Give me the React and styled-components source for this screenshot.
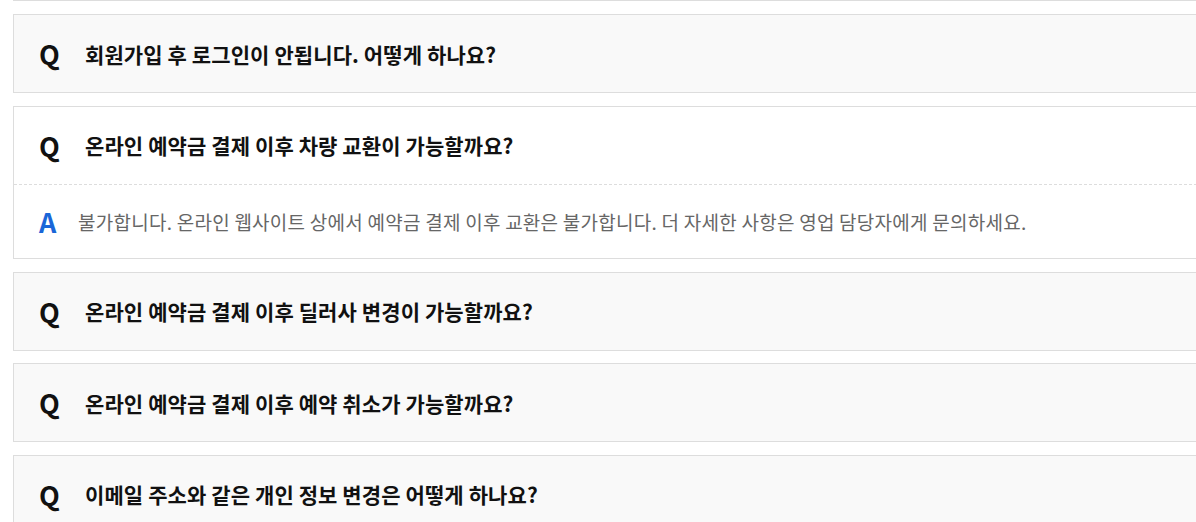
import React, { useState } from "react";
import styled, { createGlobalStyle } from "styled-components";

const GlobalStyle = createGlobalStyle`
  html, body {
    margin: 0;
    padding: 0;
    background: #fff;
    overflow: hidden;
  }
  body {
    font-family: "Noto Sans CJK KR", "Noto Sans", sans-serif;
  }
`;

const faqs = [
  {
    q: "회원가입 후 로그인이 안됩니다. 어떻게 하나요?",
    a: "가입하신 이메일 인증을 완료하신 후 다시 로그인해 주세요.",
  },
  {
    q: "온라인 예약금 결제 이후 차량 교환이 가능할까요?",
    a: "불가합니다. 온라인 웹사이트 상에서 예약금 결제 이후 교환은 불가합니다. 더 자세한 사항은 영업 담당자에게 문의하세요.",
  },
  {
    q: "온라인 예약금 결제 이후 딜러사 변경이 가능할까요?",
    a: "딜러사 변경은 영업 담당자에게 문의하세요.",
  },
  {
    q: "온라인 예약금 결제 이후 예약 취소가 가능할까요?",
    a: "마이페이지에서 예약 취소를 신청하실 수 있습니다.",
  },
  {
    q: "이메일 주소와 같은 개인 정보 변경은 어떻게 하나요?",
    a: "마이페이지의 회원정보 수정에서 변경하실 수 있습니다.",
  },
];

const List = styled.ul`
  list-style: none;
  margin: 0 0 0 13px;
  padding: 13px 0 0;
  width: 1200px;
  border-top: 1px solid #ddd;
`;

const Item = styled.li`
  margin-bottom: 12.5px;
  border: 1px solid #ddd;
  background: ${(p) => (p.$open ? "#fff" : "#f9f9f9")};
`;

const Row = styled.div`
  display: flex;
  align-items: center;
  height: ${(p) => p.$h}px;
  padding-left: 25px;
  cursor: ${(p) => (p.$clickable ? "pointer" : "default")};
`;

const Question = styled(Row)`
  border-bottom: ${(p) => (p.$open ? "1px dashed #ddd" : "none")};
`;

const Mark = styled.span`
  flex: 0 0 auto;
  width: ${(p) => p.$w}px;
  font-weight: 700;
  font-size: 27px;
  line-height: 1;
  color: ${(p) => p.$color};
`;

const QText = styled.span`
  font-size: 21px;
  font-weight: 700;
  letter-spacing: 0.1px;
  color: #111;
`;

const AText = styled.span`
  font-size: 19px;
  font-weight: 400;
  letter-spacing: 0.25px;
  color: #666;
`;

export default function App() {
  const [open, setOpen] = useState(1);

  return (
    <>
      <GlobalStyle />
      <List>
        {faqs.map((f, i) => (
          <Item key={i} $open={open === i}>
            <Question
              $h={77}
              $open={open === i}
              $clickable
              onClick={() => setOpen(open === i ? -1 : i)}
            >
              <Mark $w={46} $color="#111">Q</Mark>
              <QText>{f.q}</QText>
            </Question>
            {open === i && (
              <Row $h={73.5}>
                <Mark $w={39} $color="#1a66d8">A</Mark>
                <AText>{f.a}</AText>
              </Row>
            )}
          </Item>
        ))}
      </List>
    </>
  );
}
